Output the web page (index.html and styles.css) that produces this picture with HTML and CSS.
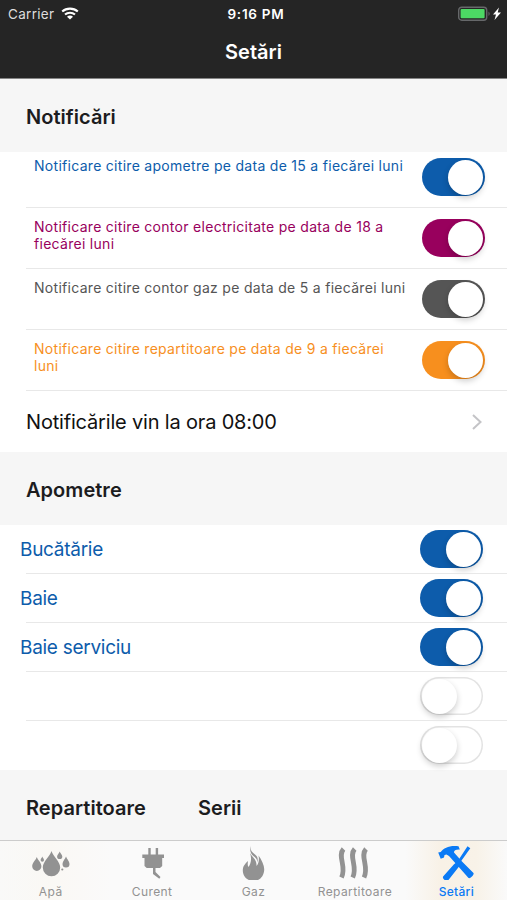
FILE: index.html
```html
<!DOCTYPE html>
<html lang="ro">
<head>
    <meta charset="utf-8">
    <meta name="viewport" content="width=device-width,initial-scale=1.0">
    <title>Setări</title>
    <link rel="stylesheet" href="styles.css">
</head>
<body>
<header class="topbar">
    <div class="status">
        <div class="status-left">
            <span class="carrier">Carrier</span>
            <svg class="wifi" width="18" height="13" viewBox="0 0 18 13">
                <path d="M1.2 4.6C5.5.6 12.5.6 16.8 4.6" fill="none" stroke="#fff" stroke-width="2.1"/>
                <path d="M4 7.6c2.8-2.6 7.200-2.600 10 0" fill="none" stroke="#fff" stroke-width="2"/>
                <path d="M9 12.600L6 9.700c1.700-1.500 4.300-1.500 6 0z" fill="#fff"/>
            </svg>
        </div>
        <span class="time">9:16 PM</span>
        <div class="status-right">
            <svg width="44" height="16" viewBox="0 0 44 16">
                <rect x=".7" y="1.200" width="28" height="13" rx="3" fill="none" stroke="#66686a" stroke-width="1.400"/>
                <rect x="2.600" y="3.100" width="24" height="9.200" rx="1" fill="#4cd964"/>
                <path d="M30.500 5.500c1.600.8 1.600 3.600 0 4.400z" fill="#66686a"/>
                <path d="M41 1.500l-6 7h3l-1.500 5.500 6.500-7.500h-3.300z" fill="#fff"/>
            </svg>
        </div>
    </div>
    <h1 class="title">Setări</h1>
</header>

<main class="wrap">
    <h2 class="section"><span>Notificări</span></h2>
    <ul class="list notify">
        <li class="blue">
            <p><span>Notificare citire apometre pe data de 15 a fiecărei luni</span></p>
            <i class="switch on"></i>
        </li>
        <li class="purple">
            <p><span>Notificare citire contor electricitate pe data de 18 a</span><br><span>fiecărei luni</span></p>
            <i class="switch on"></i>
        </li>
        <li class="gray">
            <p><span>Notificare citire contor gaz pe data de 5 a fiecărei luni</span></p>
            <i class="switch on"></i>
        </li>
        <li class="orange">
            <p><span>Notificare citire repartitoare pe data de 9 a fiecărei</span><br><span>luni</span></p>
            <i class="switch on"></i>
        </li>
        <li class="hour">
            <span>Notificările vin la ora 08:00</span>
            <svg class="arrow" width="12" height="18" viewBox="0 0 12 18">
                <path d="M2 2l7.500 7L2 16" fill="none" stroke="#c4c4c7" stroke-width="2"/>
            </svg>
        </li>
    </ul>

    <h2 class="section"><span>Apometre</span></h2>
    <ul class="list meters blue">
        <li><span>Bucătărie</span><i class="switch on"></i></li>
        <li><span>Baie</span><i class="switch on"></i></li>
        <li><span>Baie serviciu</span><i class="switch on"></i></li>
        <li><i class="switch"></i></li>
        <li><i class="switch"></i></li>
    </ul>

    <h2 class="section"><span class="col">Repartitoare</span><span>Serii</span></h2>
</main>

<nav class="tabbar">
    <a class="tab">
        <svg width="40" height="38" viewBox="0 0 40 38">
            <path d="M21.500 9c1.500 5.500 8.700 10.500 8.700 16.500a8.700 8.700 0 0 1-17.400 0C12.800 19.500 20 14.500 21.500 9z"/>
            <path d="M6.800 15c.8 3 4.600 5.500 4.600 9.300a4.600 4.600 0 0 1-9.200 0c0-3.800 3.800-6.300 4.600-9.300z"/>
            <path d="M36 14.500c.6 2.500 3.500 4.500 3.500 7.500a3.500 3.500 0 0 1-7 0c0-3 2.900-5 3.500-7.500z"/>
            <path d="M29.700 9.500c.5 1.800 2.600 3.200 2.600 5a2.600 2.600 0 0 1-5.200 0c0-1.800 2.100-3.200 2.600-5z"/>
            <path d="M12.300 14.500c.4 1.300 1.700 2.300 1.700 3.600a1.700 1.700 0 0 1-3.400 0c0-1.300 1.300-2.300 1.700-3.600z"/>
            <circle cx="32.300" cy="27.500" r="1.100"/>
        </svg>
        <span>Apă</span>
    </a>
    <a class="tab">
        <svg width="40" height="38" viewBox="0 0 40 38">
            <path d="M16.300 6h2.400v6.500h5V6h2.400v6.500H32V16h-1.800v8L28 26h-4.500v4l5 5-1.200 1.800-6.300-4.800v-6h-6.300l-2.200-2v-8h-2.200v-3.500h6z"/>
        </svg>
        <span>Curent</span>
    </a>
    <a class="tab">
        <svg width="40" height="38" viewBox="0 0 40 38">
            <path d="M17.500 3.500c-.5 4.500 1 6.500 4.500 9 3 2.300 3 5 2.500 8-.2-3-1.300-4.500-3.500-6-3.200-2.300-4.500-6-3.500-11z"/>
            <path d="M17 11c2 4 7 6.500 6.500 13 2-2.500 3-6 2-10.500 3.200 4.500 6 10 5.700 14.500-.4 6.500-4.800 11-10.700 11S9.800 34.500 9.800 28.500c0-4.500 2.200-6.500 5.200-9.500-.5 3.500-.3 4.500.5 6 2.500-3.500 3.500-8.500 1.500-14z"/>
        </svg>
        <span>Gaz</span>
    </a>
    <a class="tab">
        <svg width="40" height="38" viewBox="0 0 40 38">
            <path class="wave" d="M9.500 7C3 14 13 25 7.500 35.500M20.700 7c-6.500 7 3.500 18-2 28.500M32 7c-6.500 7 3.500 18-2 28.500"/>
        </svg>
        <span>Repartitoare</span>
    </a>
    <a class="tab active">
        <svg width="40" height="38" viewBox="0 0 40 38">
            <path d="M2.200 10.500l2.500-.5C8 5.500 14 3 22.500 4.200l1.300 3.300c-4-.2-6 .8-5.800 3.100l8 8.900 11.500 11.500c1 1.500-3 6-5 5L21.500 23.500 13 14l-2.500-1.500-2 .5-.5 2.500-3.300 1.200z"/>
            <path d="M31.500 4.200l2.800 2-10 14-1 4-11 14c-1.800 1.800-6.500-1.500-5.200-3.800l10.900-12.200 3.500-2.700z"/>
        </svg>
        <span>Setări</span>
    </a>
</nav>
</body>
</html>
```
FILE: styles.css
```css
html, body {
    padding: 0;
    margin: 0;
    width: 100%;
    height: 100%;
    font-family: Inter, "Liberation Sans", sans-serif;
    color: #1c1c1e;
}

* {
    box-sizing: border-box;
}

body {
    display: flex;
    flex-direction: column;
    overflow: hidden;
    background-color: #f6f6f6;
}

h1, h2, p, ul {
    margin: 0;
    padding: 0;
    font-weight: normal;
}

span {
    white-space: nowrap;
}

.topbar {
    height: 79px;
    flex: none;
    color: #fff;
    background-color: #252525;
    border-bottom: 1px solid #858585;
}

.status {
    display: grid;
    grid-template-columns: 1fr auto 1fr;
    align-items: center;
    height: 28px;
    padding: 0 5px 0 8px;
    font-size: 13.5px;
}

.status-left {
    display: flex;
    align-items: center;
    gap: 7px;
}

.carrier {
    color: #ddd;
    letter-spacing: .3px;
}

.wifi {
    margin-top: -2px;
}

.time {
    font-size: 13.5px;
    font-weight: 600;
    letter-spacing: .75px;
    margin-left: 2px;
}

.status-right {
    display: flex;
    justify-content: flex-end;
}

.title {
    padding-top: 11px;
    font-size: 20px;
    line-height: 26px;
    font-weight: 600;
    text-align: center;
}

.wrap {
    flex: none;
    height: 761px;
    overflow: hidden;
}

.section {
    display: flex;
    align-items: center;
    height: 73px;
    padding: 2px 26px 0;
    font-size: 20px;
    font-weight: 600;
    letter-spacing: .04px;
    background-color: #f6f6f6;
}

.section .col {
    width: 172px;
}

.list {
    list-style: none;
    background-color: #fff;
}

.list li {
    position: relative;
    display: flex;
    justify-content: space-between;
}

/* separator starts at the text margin, not at the screen edge */
.list li:not(:last-child)::after {
    content: "";
    position: absolute;
    left: 26px;
    right: 0;
    bottom: 0;
    height: 1px;
    background-color: #e8e8e8;
}

.notify li {
    height: 61px;
    padding: 11px 22px 0 34px;
}

.notify li:first-child {
    height: 56px;
    padding-top: 6px;
}

.notify p {
    margin-top: -1px;
    font-size: 14px;
    line-height: 17px;
    letter-spacing: .29px;
}

.notify .hour {
    height: 61px;
    align-items: center;
    padding: 1px 24px 0 26px;
    font-size: 20px;
    letter-spacing: -.18px;
    color: #111;
}

.meters li {
    height: 49px;
    align-items: center;
    padding: 0 24px 0 20px;
    font-size: 19px;
    letter-spacing: -.28px;
}

.meters .switch {
    margin: -1px 0 0 auto;
}

.blue {
    color: #0d5cab;
}

.purple {
    color: #98005d;
}

.gray {
    color: #555;
}

.orange {
    color: #f78f1e;
}

.switch {
    display: block;
    flex: none;
    width: 63px;
    height: 38px;
    padding: 1.5px;
    border-radius: 19px;
}

.switch::before {
    content: "";
    display: block;
    width: 35px;
    height: 35px;
    border-radius: 50%;
    background-color: #fff;
    box-shadow: 0 3px 6px rgba(0, 0, 0, .2);
}

.switch.on {
    background-color: currentColor;
}

.switch.on::before {
    margin-left: 24.5px;
}

.switch:not(.on) {
    box-shadow: inset 0 0 0 1.5px #e3e3e3;
}

.tabbar {
    flex: none;
    display: flex;
    height: 60px;
    border-top: 1px solid #ccc;
    background: linear-gradient(90deg, #f9f9f8 0, #faf8f4 10%, #fafafa 22%, #fafafa 80%, #f8f1e6 87%, #f8f2e8 94%, #fafafa 100%);
}

.tab {
    flex: 1;
    display: flex;
    flex-direction: column;
    align-items: center;
    color: #929292;
    font-size: 12px;
    line-height: 14px;
    letter-spacing: .42px;
}

.tab svg {
    margin: 1px 1px 5px 0;
    fill: currentColor;
}

.tab .wave {
    fill: none;
    stroke: currentColor;
    stroke-width: 4.8;
}

.active {
    color: #0b7af5;
}

.active span {
    font-weight: 500;
    letter-spacing: .3px;
}
```
